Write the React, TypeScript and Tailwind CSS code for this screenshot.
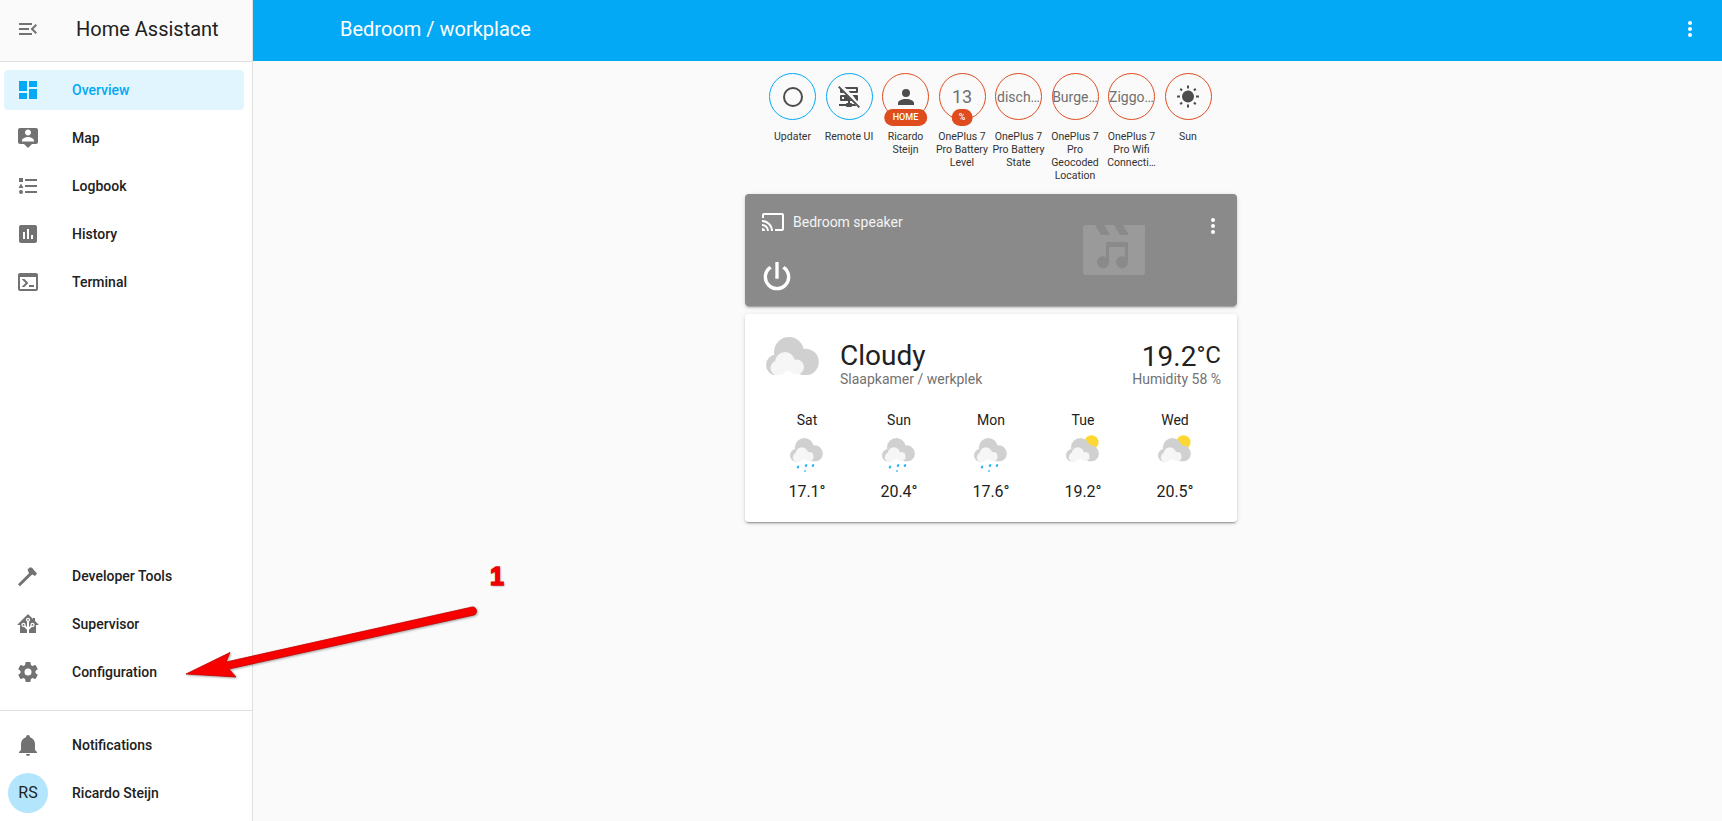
import type { ReactNode } from 'react'

const ICONS = {
  menuOpen: 'M21,15.61L19.59,17L14.58,12L19.59,7L21,8.39L17.44,12L21,15.61M3,6H16V8H3V6M3,13V11H13V13H3M3,18V16H16V18H3Z',
  dashboard: 'M13,3V9H21V3M13,21H21V11H13M3,21H11V15H3M3,13H11V3H3V13Z',
  map: 'M2 4C2 2.89 2.9 2 4 2H20C21.11 2 22 2.9 22 4V16C22 17.11 21.11 18 20 18H16L12 22L8 18H4C2.9 18 2 17.11 2 16V4M18 15.5V14.5C18 12.5 14 11 12 11C10 11 6 12.5 6 14.5V15.5H18M12 3.5C10.34 3.5 9 4.84 9 6.5C9 8.16 10.34 9.5 12 9.5C13.66 9.5 15 8.16 15 6.5C15 4.84 13.66 3.5 12 3.5Z',
  logbook: 'M5,9.5L7.5,14H2.5L5,9.5M3,4H7V8H3V4M5,20A2,2 0 0,0 7,18A2,2 0 0,0 5,16A2,2 0 0,0 3,18A2,2 0 0,0 5,20M9,5V7H21V5H9M9,19H21V17H9V19M9,13H21V11H9V13Z',
  history: 'M19 3H5C3.9 3 3 3.9 3 5V19C3 20.1 3.9 21 5 21H19C20.1 21 21 20.1 21 19V5C21 3.9 20.1 3 19 3M9 17H7V10H9V17M13 17H11V7H13V17M17 17H15V13H17V17Z',
  console: 'M20,19V7H4V19H20M20,3A2,2 0 0,1 22,5V19A2,2 0 0,1 20,21H4A2,2 0 0,1 2,19V5C2,3.89 2.9,3 4,3H20M13,17V15H18V17H13M9.58,13L5.57,9H8.4L11.7,12.3C12.09,12.69 12.09,13.33 11.7,13.72L8.42,17H5.59L9.58,13Z',
  hammer: 'M2 20.3L13 9.3L11.5 5.5L14 3.2C15.5 3.2 16.5 4 17 5L21 9.5L19 12L16.5 10.5L15 11.5L4 22.3Z',
  homeAssistant: 'M21.8,13H20V21H13V17.67L15.79,14.88L16.5,15C17.66,15 18.6,14.06 18.6,12.9C18.6,11.74 17.66,10.8 16.5,10.8A2.1,2.1 0 0,0 14.4,12.9L14.5,13.61L13,15.13V9.65C13.66,9.29 14.1,8.6 14.1,7.8A2.1,2.1 0 0,0 12,5.7A2.1,2.1 0 0,0 9.9,7.8C9.9,8.6 10.34,9.29 11,9.65V15.13L9.5,13.61L9.6,12.9A2.1,2.1 0 0,0 7.5,10.8A2.1,2.1 0 0,0 5.4,12.9A2.1,2.1 0 0,0 7.5,15L8.21,14.88L11,17.67V21H4V13H2.25C1.83,13 1.42,13 1.42,12.79C1.43,12.57 1.85,12.15 2.28,11.72L11,3C11.33,2.67 11.67,2.33 12,2.33C12.33,2.33 12.67,2.67 13,3L17,7V6H19V9L21.78,11.78C22.18,12.18 22.59,12.59 22.6,12.8C22.6,13 22.2,13 21.8,13M7.5,12A0.9,0.9 0 0,1 8.4,12.9A0.9,0.9 0 0,1 7.5,13.8A0.9,0.9 0 0,1 6.6,12.9A0.9,0.9 0 0,1 7.5,12M16.5,12C17,12 17.4,12.4 17.4,12.9C17.4,13.4 17,13.8 16.5,13.8A0.9,0.9 0 0,1 15.6,12.9A0.9,0.9 0 0,1 16.5,12M12,6.9C12.5,6.9 12.9,7.3 12.9,7.8C12.9,8.3 12.5,8.7 12,8.7C11.5,8.7 11.1,8.3 11.1,7.8C11.1,7.3 11.5,6.9 12,6.9Z',
  cog: 'M12,15.5A3.5,3.5 0 0,1 8.5,12A3.5,3.5 0 0,1 12,8.5A3.5,3.5 0 0,1 15.5,12A3.5,3.5 0 0,1 12,15.5M19.43,12.97C19.47,12.65 19.5,12.33 19.5,12C19.5,11.67 19.47,11.34 19.43,11L21.54,9.37C21.73,9.22 21.78,8.95 21.66,8.73L19.66,5.27C19.54,5.05 19.27,4.96 19.05,5.05L16.56,6.05C16.04,5.66 15.5,5.32 14.87,5.07L14.5,2.42C14.46,2.18 14.25,2 14,2H10C9.75,2 9.54,2.18 9.5,2.42L9.13,5.07C8.5,5.32 7.96,5.66 7.44,6.05L4.95,5.05C4.73,4.96 4.46,5.05 4.34,5.27L2.34,8.73C2.21,8.95 2.27,9.22 2.46,9.37L4.57,11C4.53,11.34 4.5,11.67 4.5,12C4.5,12.33 4.53,12.65 4.57,12.97L2.46,14.63C2.27,14.78 2.21,15.05 2.34,15.27L4.34,18.73C4.46,18.95 4.73,19.03 4.95,18.95L7.44,17.94C7.96,18.34 8.5,18.68 9.13,18.93L9.5,21.58C9.54,21.82 9.75,22 10,22H14C14.25,22 14.46,21.82 14.5,21.58L14.87,18.93C15.5,18.67 16.04,18.34 16.56,17.94L19.05,18.95C19.27,19.03 19.54,18.95 19.66,18.73L21.66,15.27C21.78,15.05 21.73,14.78 21.54,14.63L19.43,12.97Z',
  bell: 'M21,19V20H3V19L5,17V11C5,7.9 7.03,5.17 10,4.29C10,4.19 10,4.1 10,4A2,2 0 0,1 12,2A2,2 0 0,1 14,4C14,4.1 14,4.19 14,4.29C16.97,5.17 19,7.9 19,11V17L21,19M14,21A2,2 0 0,1 12,23A2,2 0 0,1 10,21',
  dots: 'M12,16A2,2 0 0,1 14,18A2,2 0 0,1 12,20A2,2 0 0,1 10,18A2,2 0 0,1 12,16M12,10A2,2 0 0,1 14,12A2,2 0 0,1 12,14A2,2 0 0,1 10,12A2,2 0 0,1 12,10M12,4A2,2 0 0,1 14,6A2,2 0 0,1 12,8A2,2 0 0,1 10,6A2,2 0 0,1 12,4Z',
  circle: 'M12,20A8,8 0 0,1 4,12A8,8 0 0,1 12,4A8,8 0 0,1 20,12A8,8 0 0,1 12,20M12,2A10,10 0 0,0 2,12A10,10 0 0,0 12,22A10,10 0 0,0 22,12A10,10 0 0,0 12,2Z',
  serverOff: 'M7.5 2H20a1 1 0 0 1 1 1v4a1 1 0 0 1-1 1h-6.5l-2-2H19V4H9.5L7.5 2M3 4.2L6.8 8H4a1 1 0 0 1-1-1V4.2M15.5 10H20a1 1 0 0 1 1 1v4a1 1 0 0 1-1 .9L15.5 10M4 10h4.8l6 6H13v2h1a1 1 0 0 1 1 1h3l2 2h-5a1 1 0 0 1-1 1h-4a1 1 0 0 1-1-1H2v-2h7a1 1 0 0 1 1-1h1v-2H4a1 1 0 0 1-1-1v-4a1 1 0 0 1 1-1M5 12v2h2v-2H5M2.3 1L1 2.3 21.7 23l1.3-1.3L2.3 1Z',
  account: 'M12,4A4,4 0 0,1 16,8A4,4 0 0,1 12,12A4,4 0 0,1 8,8A4,4 0 0,1 12,4M12,14C16.42,14 20,15.79 20,18V20H4V18C4,15.79 7.58,14 12,14Z',
  sun: 'M3.55,18.54L4.96,19.95L6.76,18.16L5.34,16.74M11,22.45C11.32,22.45 13,22.45 13,22.45V19.5H11M12,5.5A6,6 0 0,0 6,11.5A6,6 0 0,0 12,17.5A6,6 0 0,0 18,11.5C18,8.18 15.31,5.5 12,5.5M20,12.5H23V10.5H20M17.24,18.16L19.04,19.95L20.45,18.54L18.66,16.74M20.45,4.46L19.04,3.05L17.24,4.84L18.66,6.26M13,0.55H11V3.5H13M4,10.5H1V12.5H4M6.76,4.84L4.96,3.05L3.55,4.46L5.34,6.26L6.76,4.84Z',
  cast: 'M1,10V12A9,9 0 0,1 10,21H12C12,14.92 7.07,10 1,10M1,14V16A5,5 0 0,1 6,21H8A7,7 0 0,0 1,14M1,18V21H4A3,3 0 0,0 1,18M21,3H3C1.89,3 1,3.89 1,5V8H3V5H21V19H14V21H21A2,2 0 0,0 23,19V5C23,3.89 22.1,3 21,3Z',
  power: 'M16.56,5.44L15.11,6.89C16.84,7.94 18,9.83 18,12A6,6 0 0,1 12,18A6,6 0 0,1 6,12C6,9.83 7.16,7.94 8.88,6.88L7.44,5.44C5.36,6.88 4,9.28 4,12A8,8 0 0,0 12,20A8,8 0 0,0 20,12C20,9.28 18.64,6.88 16.56,5.44M13,3H11V13H13',
}

function Icon({ d, className = 'w-6 h-6' }: { d: string; className?: string }) {
  return (
    <svg viewBox="0 0 24 24" fill="currentColor" fillRule="evenodd" className={`${className} shrink-0`}>
      <path d={d} />
    </svg>
  )
}

function NavItem({ icon, label, active }: { icon: string; label: string; active?: boolean }) {
  return (
    <div
      className={`flex items-center h-10 ml-1 mr-2 rounded pl-3 text-sm font-medium ${
        active ? 'bg-[#e1f5fe] text-[#03a9f4]' : 'text-[#212121]'
      }`}
    >
      <span className={active ? 'text-[#03a9f4]' : 'text-[#727272]'}>
        <Icon d={icon} />
      </span>
      <span className="ml-8">{label}</span>
    </div>
  )
}

const TOP_NAV = [
  { icon: ICONS.dashboard, label: 'Overview', active: true },
  { icon: ICONS.map, label: 'Map' },
  { icon: ICONS.logbook, label: 'Logbook' },
  { icon: ICONS.history, label: 'History' },
  { icon: ICONS.console, label: 'Terminal' },
]

const BOTTOM_NAV = [
  { icon: ICONS.hammer, label: 'Developer Tools' },
  { icon: ICONS.homeAssistant, label: 'Supervisor' },
  { icon: ICONS.cog, label: 'Configuration' },
]

function Sidebar() {
  return (
    <aside className="w-[253px] h-full shrink-0 flex flex-col bg-white border-r border-[#e0e0e0]">
      <div className="h-[62px] shrink-0 flex items-center bg-[#fafafa] border-b border-[#e0e0e0] pl-4 pb-[3px]">
        <span className="text-[#727272]">
          <Icon d={ICONS.menuOpen} />
        </span>
        <span className="ml-9 text-xl text-[#212121]">Home Assistant</span>
      </div>
      <nav className="flex flex-col gap-2 pt-2">
        {TOP_NAV.map((item) => (
          <NavItem key={item.label} {...item} />
        ))}
      </nav>
      <nav className="mt-auto flex flex-col gap-2">
        {BOTTOM_NAV.map((item) => (
          <NavItem key={item.label} {...item} />
        ))}
      </nav>
      <div className="mt-[18px] border-t border-[#e0e0e0] pt-[10px] pb-1">
        <div className="h-12 flex items-center pl-4 text-sm font-medium text-[#212121]">
          <span className="text-[#727272]">
            <Icon d={ICONS.bell} />
          </span>
          <span className="ml-8">Notifications</span>
        </div>
        <div className="h-12 flex items-center pl-2 text-sm font-medium text-[#212121]">
          <span className="w-10 h-10 rounded-full bg-[#b3e5fc] flex items-center justify-center text-base font-normal">
            RS
          </span>
          <span className="ml-6">Ricardo Steijn</span>
        </div>
      </div>
    </aside>
  )
}

type BadgeProps = { label: string; color: string; children: ReactNode; pill?: string }

function Badge({ label, color, children, pill }: BadgeProps) {
  return (
    <div className="w-[56.5px] flex flex-col items-center">
      <div
        className={`relative w-[47px] h-[47px] rounded-full border-[1.5px] flex items-center justify-center text-[#707070] ${color}`}
      >
        {children}
        {pill && (
          <span
            className={`absolute left-1/2 -translate-x-1/2 top-[35px] h-[17px] rounded-full bg-[#df4c1e] text-white text-[9px] font-medium leading-[17px] ${
              pill === '%' ? 'px-[7px]' : 'px-[9px]'
            }`}
          >
            {pill}
          </span>
        )}
      </div>
      <div className="mt-[10px] w-[54px] text-center text-[10.5px] leading-[13px] text-[#333]">
        {label}
      </div>
    </div>
  )
}

function BadgeIcon({ d }: { d: string }) {
  return (
    <span className="text-[#4d4d4d]">
      <Icon d={d} />
    </span>
  )
}

function Badges() {
  const blue = 'border-[#03a9f4]'
  const red = 'border-[#df4c1e]'
  const value = 'text-sm whitespace-nowrap'
  return (
    <div className="flex justify-center h-[133px] pt-3 mr-[1.5px]">
      <Badge label="Updater" color={blue}>
        <BadgeIcon d={ICONS.circle} />
      </Badge>
      <Badge label="Remote UI" color={blue}>
        <BadgeIcon d={ICONS.serverOff} />
      </Badge>
      <Badge label="Ricardo Steijn" color={red} pill="HOME">
        <BadgeIcon d={ICONS.account} />
      </Badge>
      <Badge label="OnePlus 7 Pro Battery Level" color={red} pill="%">
        <span className="text-lg">13</span>
      </Badge>
      <Badge label="OnePlus 7 Pro Battery State" color={red}>
        <span className={value}>disch…</span>
      </Badge>
      <Badge label="OnePlus 7 Pro Geocoded Location" color={red}>
        <span className={value}>Burge…</span>
      </Badge>
      <Badge label="OnePlus 7 Pro Wifi Connecti…" color={red}>
        <span className={value}>Ziggo…</span>
      </Badge>
      <Badge label="Sun" color={red}>
        <BadgeIcon d={ICONS.sun} />
      </Badge>
    </div>
  )
}

function Cloud({ width, height }: { width: number; height: number }) {
  return (
    <svg x="0" y="0" width={width} height={height} viewBox="0 0 53 38">
      <g fill="#d0d0d0">
        <circle cx="23" cy="15" r="15" />
        <circle cx="39.5" cy="25" r="13.3" />
        <circle cx="10.5" cy="28" r="10.5" />
      </g>
      <g fill="#f6f6f6">
        <circle cx="19" cy="25" r="10" />
        <circle cx="30.5" cy="30" r="7.5" />
        <circle cx="12" cy="31" r="7.5" />
      </g>
    </svg>
  )
}

function SmallWeather({ kind }: { kind: 'rain' | 'sun' }) {
  return (
    <svg width="34" height="37" viewBox="0 -3 34 37" className="mx-auto">
      {kind === 'sun' && <circle cx="25.5" cy="4.3" r="7" fill="#fdd835" />}
      <Cloud width={33} height={23.6} />
      {kind === 'rain' && (
        <g fill="#29b6f6">
          <ellipse cx="8" cy="29" rx="1.1" ry="1.6" transform="rotate(35 8 29)" />
          <ellipse cx="16" cy="27.5" rx="1.1" ry="1.6" transform="rotate(35 16 27.5)" />
          <ellipse cx="23" cy="27.5" rx="1.1" ry="1.6" transform="rotate(35 23 27.5)" />
          <ellipse cx="15" cy="33" rx="0.8" ry="1" />
        </g>
      )}
    </svg>
  )
}

const FORECAST = [
  { day: 'Sat', temp: '17.1°', kind: 'rain' as const },
  { day: 'Sun', temp: '20.4°', kind: 'rain' as const },
  { day: 'Mon', temp: '17.6°', kind: 'rain' as const },
  { day: 'Tue', temp: '19.2°', kind: 'sun' as const },
  { day: 'Wed', temp: '20.5°', kind: 'sun' as const },
]

const CARD_SHADOW =
  'shadow-[0_2px_2px_0_rgba(0,0,0,0.14),0_1px_5px_0_rgba(0,0,0,0.12),0_3px_1px_-2px_rgba(0,0,0,0.2)]'

function MediaCard() {
  return (
    <div className={`h-[112px] rounded bg-[#8a8a8a] text-white flex ${CARD_SHADOW}`}>
      <div className="pl-4 pt-4">
        <div className="flex items-center h-6">
          <Icon d={ICONS.cast} />
          <span className="ml-2 text-sm text-[#f4f4f4]">Bedroom speaker</span>
        </div>
        <div className="mt-[23px] -ml-1">
          <Icon d={ICONS.power} className="w-10 h-10" />
        </div>
      </div>
      <svg viewBox="0 0 62 50" className="ml-auto mt-[31px] w-[62px] h-[50px]" fill="#ffffff" fillOpacity="0.14" fillRule="evenodd">
        <path d="M3 0H12L18 10H27L21 0H31L37 10H46L40 0H62V47A3 3 0 0 1 59 50H3A3 3 0 0 1 0 47V3A3 3 0 0 1 3 0ZM23 17V32A6 6 0 1 0 26 37V22H42V32A6 6 0 1 0 45 37V17Z" />
      </svg>
      <div className="ml-[56px] mt-5 mr-3">
        <Icon d={ICONS.dots} />
      </div>
    </div>
  )
}

function WeatherCard() {
  return (
    <div className={`mt-2 h-[208px] rounded bg-white px-4 ${CARD_SHADOW}`}>
      <div className="flex">
        <svg width="53" height="38" className="ml-[5px] mt-[23px] shrink-0">
          <Cloud width={53} height={38} />
        </svg>
        <div className="ml-[21px] pt-[28px]">
          <div className="text-[28px] leading-[27px] text-[#212121]">Cloudy</div>
          <div className="text-sm leading-5 text-[#727272]">Slaapkamer / werkplek</div>
        </div>
        <div className="ml-auto pt-[25px] text-right">
          <div className="h-[30px] leading-[28px] text-[#212121]">
            <span className="text-[28px]">19.2</span>
            <span className="text-2xl align-[3px]">°C</span>
          </div>
          <div className="text-sm leading-5 text-[#727272]">Humidity 58 %</div>
        </div>
      </div>
      <div className="grid grid-cols-5 mt-[21px] text-center text-[#212121]">
        {FORECAST.map((f) => (
          <div key={f.day}>
            <div className="text-sm leading-5">{f.day}</div>
            <div className="mt-[5px]">
              <SmallWeather kind={f.kind} />
            </div>
            <div className="mt-2 text-base leading-6">{f.temp}</div>
          </div>
        ))}
      </div>
    </div>
  )
}

export default function App() {
  return (
    <div className="relative h-screen w-full flex overflow-hidden bg-[#fafafa] font-['Roboto',sans-serif]">
      <Sidebar />
      <div className="flex-1 flex flex-col min-w-0">
        <header className="h-[61px] shrink-0 bg-[#03a9f4] text-white flex items-center pl-[87px] pr-5 pb-[3px]">
          <span className="text-xl">Bedroom / workplace</span>
          <span className="ml-auto">
            <Icon d={ICONS.dots} />
          </span>
        </header>
        <main className="flex-1 flex justify-center pl-[7px]">
          <div className="w-[492px]">
            <Badges />
            <MediaCard />
            <WeatherCard />
          </div>
        </main>
      </div>

      {/* Annotation drawn over the page */}
      <svg className="absolute left-0 top-0 pointer-events-none" width="600" height="700" style={{ filter: 'drop-shadow(1px 1px 1px rgba(0,0,0,0.35))' }}>
        <path
          d="M186 674L230 652.5L226 662L472 607C477 606 478 614 474 615L229 669L236 677Z"
          fill="#f60000"
          stroke="#c80000"
          strokeWidth="0.8"
          strokeLinejoin="round"
        />
      </svg>
      <span className="absolute left-[490px] top-[561px] text-[25px] leading-[30px] font-bold font-['Liberation_Sans',sans-serif] text-[#f00000] [-webkit-text-stroke:1.5px_#f00000] [text-shadow:1px_1px_2px_rgba(0,0,0,0.5)]">
        1
      </span>
    </div>
  )
}
